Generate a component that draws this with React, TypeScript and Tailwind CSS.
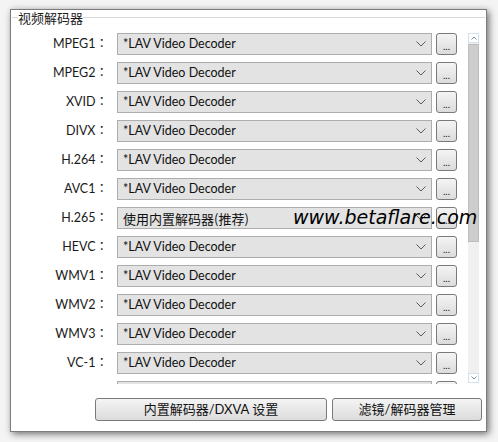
const rows: [string, string][] = [
  ["MPEG1", "*LAV Video Decoder"],
  ["MPEG2", "*LAV Video Decoder"],
  ["XVID", "*LAV Video Decoder"],
  ["DIVX", "*LAV Video Decoder"],
  ["H.264", "*LAV Video Decoder"],
  ["AVC1", "*LAV Video Decoder"],
  ["H.265", "使用内置解码器(推荐)"],
  ["HEVC", "*LAV Video Decoder"],
  ["WMV1", "*LAV Video Decoder"],
  ["WMV2", "*LAV Video Decoder"],
  ["WMV3", "*LAV Video Decoder"],
  ["VC-1", "*LAV Video Decoder"],
  ["VP8", "*LAV Video Decoder"],
];

const font = "font-['Lato','Noto_Sans_CJK_TC',sans-serif]";

const Chevron = () => (
  <svg width="10" height="6" viewBox="0 0 10 6" className="shrink-0">
    <polyline points="0.5,0.5 5,5 9.5,0.5" fill="none" stroke="#5a5a5a" strokeWidth="1" />
  </svg>
);

const Row = ({ label, value }: { label: string; value: string }) => (
  <div className="flex items-center h-[22px] shrink-0">
    <span className="w-[97px] text-right text-[12.5px] text-[#1a1a1a] leading-none">{label}：</span>
    <div className="ml-[9px] w-[315px] h-[22px] flex items-center justify-between pl-[5px] pr-[5px] bg-[#e3e3e3] border border-[#adadad] text-[#111] leading-none">
      <span
        className={
          value.startsWith("*")
            ? "text-[12.5px] font-['Lato',sans-serif]"
            : "text-[13px] font-['Noto_Sans_CJK_SC',sans-serif]"
        }
      >
        {value}
      </span>
      <Chevron />
    </div>
    <button className="ml-[4px] w-[21px] h-[22px] rounded-[3px] border border-[#7a7a7a] bg-gradient-to-b from-[#f4f4f4] to-[#dcdcdc] text-[10px] leading-none text-[#222] flex items-center justify-center pt-[4px]">
      ...
    </button>
  </div>
);

const ScrollBar = () => (
  <div className="ml-[11px] w-[11px] h-[350px] flex flex-col bg-[#f0f0f0]">
    <div className="h-[10px] flex items-center justify-center bg-white border border-[#d6e0ea]">
      <svg width="6" height="4" viewBox="0 0 6 4">
        <polyline points="0.5,3.5 3,1 5.5,3.5" fill="none" stroke="#6f8fb0" strokeWidth="1" />
      </svg>
    </div>
    <div className="mt-[1px] h-[198px] bg-[#cdcdcd] border border-[#bdbdbd]" />
    <div className="flex-1" />
    <div className="h-[10px] flex items-center justify-center bg-white border border-[#d6e0ea]">
      <svg width="6" height="4" viewBox="0 0 6 4">
        <polyline points="0.5,0.5 3,3 5.5,0.5" fill="none" stroke="#6f8fb0" strokeWidth="1" />
      </svg>
    </div>
  </div>
);

export default function App() {
  return (
    <div className={`w-[498px] h-[442px] bg-[#f4f4f4] pl-[10px] pt-[9px] ${font}`}>
      <div className="relative w-[477px] h-[423px] bg-white border border-[#7c7c7c] shadow-[2px_2px_7px_rgba(0,0,0,0.55)]">
        <div className="flex items-center h-[14px]">
          <div className="ml-[1px] w-[6px] h-px bg-[#d8d8d8]" />
          <span className="text-[13px] leading-none text-[#1a1a1a] font-['Noto_Sans_CJK_SC',sans-serif]">视频解码器</span>
          <div className="flex-1 mr-[1px] h-px bg-[#d8d8d8]" />
        </div>

        <div className="flex mt-[9px]">
          <div className="h-[351px] overflow-hidden flex flex-col gap-[7px]">
            {rows.map(([l, v]) => (
              <Row key={l} label={l} value={v} />
            ))}
          </div>
          <ScrollBar />
        </div>

        <div className="flex gap-[5px] ml-[84px] mt-[14px] font-['Lato','Noto_Sans_CJK_SC',sans-serif]">
          <button className="w-[232px] h-[23px] rounded-[3px] border border-[#7a7a7a] bg-gradient-to-b from-[#f4f4f4] to-[#dcdcdc] text-[13px] leading-none text-[#111]">
            内置解码器/DXVA 设置
          </button>
          <button className="w-[150px] h-[23px] rounded-[3px] border border-[#7a7a7a] bg-gradient-to-b from-[#f4f4f4] to-[#dcdcdc] text-[13px] leading-none text-[#111]">
            滤镜/解码器管理
          </button>
        </div>

        <span className="absolute left-[282px] top-[198px] text-[19px] leading-none text-black font-['DejaVu_Sans'] italic">
          www.betaflare.com
        </span>
      </div>
    </div>
  );
}
